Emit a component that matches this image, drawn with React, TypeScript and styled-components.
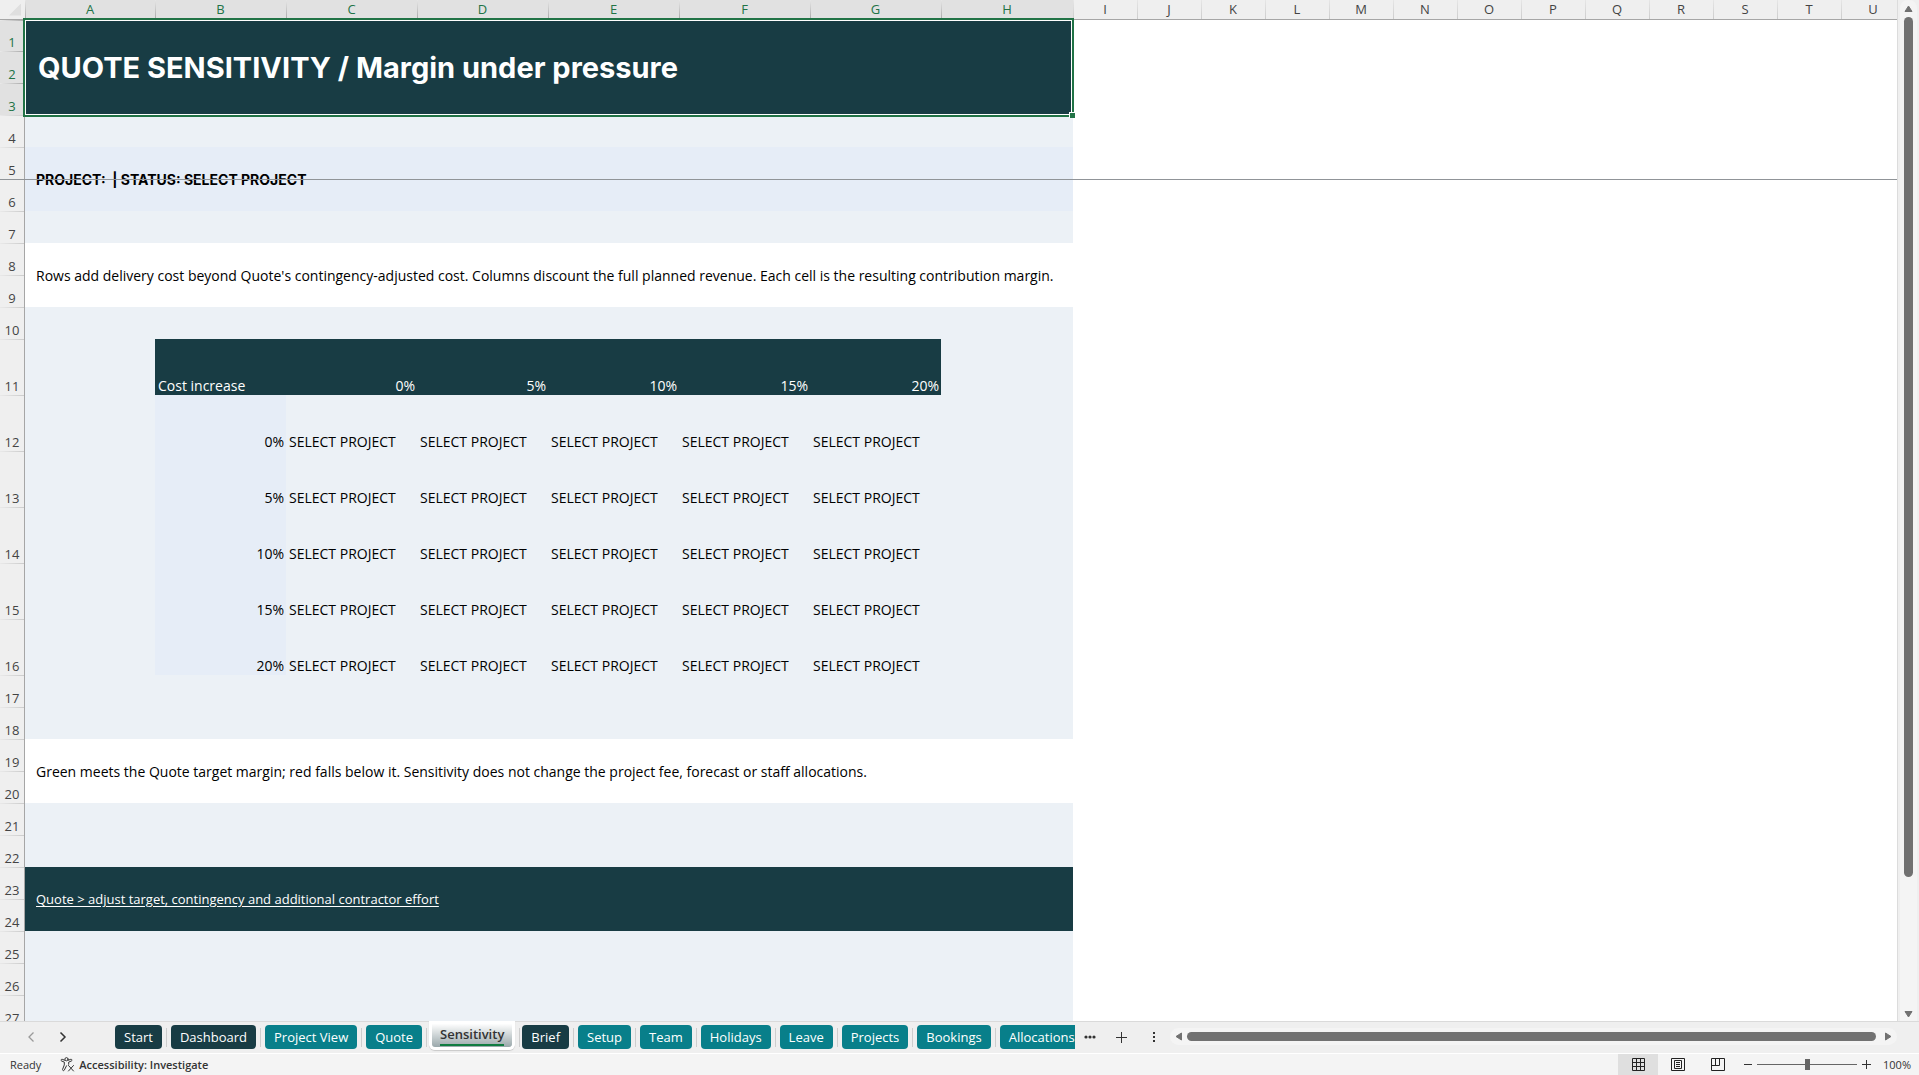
import React, { useState } from "react";
import styled, { createGlobalStyle, css } from "styled-components";

const color = {
  deep: "#183c44",
  teal: "#087f8a",
  sheet: "#ecf1f6",
  lavender: "#e6edf7",
  chrome: "#efefef",
  chromeSelected: "#e1e1e1",
  track: "#f4f4f4",
  thumb: "#717171",
  line: "#a6a6a6",
  green: "#217346",
  ink: "#444444",
};

const GlobalStyle = createGlobalStyle`
  *, *::before, *::after { box-sizing: border-box; }
  body {
    margin: 0;
    background: ${color.chrome};
    font-family: "Open Sans", "Noto Sans", sans-serif;
    color: #000;
  }
  button { font: inherit; color: inherit; border: 0; padding: 0; background: none; cursor: pointer; }
`;

const Window = styled.div`
  display: flex;
  flex-direction: column;
  height: 100vh;
  overflow: hidden;
`;

const Workspace = styled.main`
  display: flex;
  flex: 1;
  min-height: 0;
`;

const SheetPane = styled.div`
  position: relative;
  flex: 1;
  min-width: 0;
  overflow: hidden;
  background: #fff;
`;

const FreezeLine = styled.div`
  position: absolute;
  top: 179px;
  left: 0;
  right: 0;
  height: 1px;
  background: #909498;
`;

const Sheet = styled.table`
  table-layout: fixed;
  width: 100%;
  min-width: 1905px;
  border-collapse: separate;
  border-spacing: 0;
  font-size: 14px;
  line-height: 19px;

  th,
  td {
    padding: 0;
    font-weight: 400;
  }
`;

const Col = styled.col<{ $w: number }>`
  width: ${(p) => p.$w}px;
`;

const Corner = styled.th`
  height: 20px;
  background: ${color.chrome};
  border-bottom: 1px solid ${color.line};
`;

const SelectAll = styled.button`
  display: block;
  width: 12px;
  height: 12px;
  margin-left: 9px;
  background: #dfdfdf;
  clip-path: polygon(100% 0, 100% 100%, 0 100%);
`;

const selectedHead = css`
  background-color: ${color.chromeSelected};
  color: ${color.green};
`;

const ColumnHead = styled.th<{ $selected: boolean }>`
  height: 20px;
  font-size: 13px;
  line-height: 18px;
  text-align: center;
  vertical-align: top;
  color: ${color.ink};
  background: ${color.chrome} linear-gradient(#e6e6e6, ${(p) => (p.$selected ? "#a9a9a9" : "#cccccc")}) left / 1px 100% no-repeat;
  border-bottom: 1px solid ${color.line};
  ${(p) => p.$selected && selectedHead}
`;

const RowHead = styled.th<{ $selected: boolean }>`
  font-size: 13px;
  line-height: 18px;
  text-align: center;
  vertical-align: bottom;
  color: ${color.ink};
  background: ${color.chrome} linear-gradient(90deg, #e9e9e9, ${(p) => (p.$selected ? "#a9a9a9" : "#cccccc")}) top / 100% 1px no-repeat;
  border-right: 1px solid ${color.line};
  ${(p) => p.$selected && selectedHead}
`;

const Row = styled.tr<{ $h: number }>`
  height: ${(p) => p.$h}px;
`;

const Blank = styled.td`
  background: #fff;
`;

const Shade = styled.td`
  background: ${color.sheet};
`;

const TitleCell = styled.td`
  position: relative;
  background: ${color.deep};
`;

const Title = styled.h1`
  margin: 0;
  padding-left: 13px;
  font-family: Inter, "Liberation Sans", sans-serif;
  font-size: 29px;
  font-weight: 700;
  line-height: 40px;
  color: #fff;
`;

const Selection = styled.div`
  position: absolute;
  inset: -2px -1px -2px -2px;
  border: 2px solid ${color.green};
  box-shadow: inset 0 0 0 1px #fff;
  pointer-events: none;

  &::after {
    content: "";
    position: absolute;
    right: -3px;
    bottom: -3px;
    width: 6px;
    height: 6px;
    background: ${color.green};
    border-left: 1px solid #fff;
    border-top: 1px solid #fff;
  }
`;

const Band = styled.td<{ $tone: "lavender" | "white" | "deep" }>`
  background: ${(p) => (p.$tone === "lavender" ? color.lavender : p.$tone === "deep" ? color.deep : "#fff")};
`;

const Note = styled.p`
  margin: 0;
  padding-left: 11px;
`;

const Status = styled(Note)`
  font-family: Inter, "Liberation Sans", sans-serif;
  font-weight: 700;
  white-space: pre;
`;

const SheetLink = styled.a`
  margin-left: 11px;
  font-size: 13px;
  color: #fff;
  text-decoration: underline;
  text-underline-offset: 2px;
`;

const Cell = styled.td<{ $kind: "head" | "rate" | "value"; $right?: boolean }>`
  && {
    padding: 0 2px 0 3px;
  }
  vertical-align: bottom;
  white-space: nowrap;
  text-align: ${(p) => (p.$right ? "right" : "left")};
  color: ${(p) => (p.$kind === "head" ? "#fff" : "#000")};
  background: ${(p) => ({ head: color.deep, rate: color.lavender, value: color.sheet })[p.$kind]};
`;

const VerticalRail = styled.div`
  display: flex;
  flex: none;
  width: 22px;
  padding: 0 2px;
  border-left: 1px solid #dcdcdc;
`;

const VerticalTrack = styled.div`
  display: flex;
  flex-direction: column;
  align-items: center;
  flex: 1;
  padding: 5px 0 3px;
  background: ${color.track};
  border-radius: 8px 8px 0 0;
`;

const ArrowButton = styled.button`
  display: flex;
  flex: none;

  svg {
    display: block;
    fill: ${color.thumb};
  }
`;

const VerticalRun = styled.div`
  flex: 1;
  width: 9px;
  margin: 5px 0;
`;

const VerticalThumb = styled.div`
  height: 87%;
  border-radius: 5px;
  background: ${color.thumb};
`;

const TabBar = styled.nav`
  display: flex;
  flex: none;
  height: 32px;
  background: ${color.chrome};
  box-shadow: inset 0 1px #dadada;
`;

const TabArrows = styled.div`
  display: flex;
  flex: none;
  width: 115px;
  padding-left: 15px;
`;

const BarButton = styled.button<{ $w?: number; $dim?: boolean }>`
  display: flex;
  align-items: center;
  justify-content: center;
  flex: none;
  width: ${(p) => p.$w ?? 32}px;
  height: 32px;
  color: ${(p) => (p.$dim ? "#9a9a9a" : "#333")};
`;

const TabList = styled.div`
  display: flex;
  flex: 0 1 50%;
  min-width: 0;
  overflow: hidden;
`;

const TabSlot = styled.div<{ $active: boolean }>`
  display: flex;
  flex: none;
  align-items: center;

  &:not(:last-child)::after {
    content: "";
    width: 1px;
    height: 19px;
    margin: 0 4px;
    background: #cdcdcd;
  }

  ${(p) => p.$active && css`margin: 0 -2px 0 -2px;`}
`;

const Tab = styled.button<{ $dark: boolean }>`
  height: 24px;
  padding: 0 9px;
  border-radius: 4px;
  font-size: 13px;
  line-height: 24px;
  color: #fff;
  background: ${(p) => (p.$dark ? color.deep : color.teal)};
`;

const ActiveTab = styled.button`
  align-self: flex-start;
  height: 29px;
  padding: 0 8px 3px;
  border: 3px solid #fff;
  border-top: 0;
  border-radius: 0 0 6px 6px;
  background: linear-gradient(#fff 10%, #9aa8ab);
  box-shadow: 0 1px 1px #c8c8c8;
  font-size: 13px;
  font-weight: 600;
  line-height: 20px;
  color: #333;

  span {
    display: block;
    margin-top: 3px;
    border-bottom: 2px solid #107c41;
  }
`;

const HorizontalTrack = styled.div`
  display: flex;
  align-items: center;
  flex: 1;
  height: 17px;
  margin: 7px 22px 0 0;
  padding: 0 5px;
  gap: 5px;
  border-radius: 9px;
  background: ${color.track};
`;

const HorizontalThumb = styled.div`
  flex: 1;
  height: 9px;
  margin-right: 4px;
  border-radius: 5px;
  background: ${color.thumb};
`;

const StatusBar = styled.footer`
  display: flex;
  align-items: center;
  flex: none;
  height: 22px;
  padding: 0 8px 0 10px;
  border-top: 1px solid #fff;
  background: ${color.track};
  font-size: 11px;
  line-height: 16px;
  color: #333;
`;

const Accessibility = styled.button`
  display: flex;
  align-items: center;
  gap: 4px;
  margin-left: 19px;
  font-weight: 600;
`;

const Views = styled.div`
  display: flex;
  margin-left: auto;
`;

const ViewButton = styled.button<{ $on?: boolean }>`
  display: flex;
  align-items: center;
  justify-content: center;
  width: 40px;
  height: 21px;
  background: ${(p) => (p.$on ? "#dfdfdf" : "transparent")};
`;

const Zoom = styled.div`
  display: flex;
  align-items: center;
  gap: 5px;
  margin: 0 12px 0 6px;
`;

const ZoomButton = styled.button`
  display: flex;
  align-items: center;
  height: 16px;
`;

const ZoomRange = styled.input`
  appearance: none;
  width: 100px;
  height: 12px;
  margin: 0;
  background: linear-gradient(#666, #666) center / 100% 1px no-repeat;

  &::-webkit-slider-thumb {
    appearance: none;
    width: 5px;
    height: 11px;
    background: #666;
  }
`;

const leftColumns = ["A", "B", "C", "D", "E", "F", "G", "H"];
const rightColumns = ["I", "J", "K", "L", "M", "N", "O", "P", "Q", "R", "S", "T", "U"];
const columnWidths = [130, 131, 131, 131, 131, 131, 131, 132];
const rates = ["0%", "5%", "10%", "15%", "20%"];

const tabs = [
  { name: "Start", dark: true },
  { name: "Dashboard", dark: true },
  { name: "Project View", dark: false },
  { name: "Quote", dark: false },
  { name: "Sensitivity", dark: false },
  { name: "Brief", dark: true },
  { name: "Setup", dark: false },
  { name: "Team", dark: false },
  { name: "Holidays", dark: false },
  { name: "Leave", dark: false },
  { name: "Projects", dark: false },
  { name: "Bookings", dark: false },
  { name: "Allocations", dark: false },
];

function rowHeight(n: number) {
  if (n === 1) return 31;
  return n >= 11 && n <= 16 ? 56 : 32;
}

function rowCells(n: number) {
  switch (n) {
    case 1:
      return (
        <TitleCell colSpan={8} rowSpan={3}>
          <Title>QUOTE SENSITIVITY / Margin under pressure</Title>
          <Selection />
        </TitleCell>
      );
    case 5:
      return (
        <Band $tone="lavender" colSpan={8} rowSpan={2}>
          <Status>{"PROJECT:  | STATUS: SELECT PROJECT"}</Status>
        </Band>
      );
    case 8:
      return (
        <Band $tone="white" colSpan={8} rowSpan={2}>
          <Note>
            Rows add delivery cost beyond Quote's contingency-adjusted cost. Columns discount the full planned revenue.
            Each cell is the resulting contribution margin.
          </Note>
        </Band>
      );
    case 19:
      return (
        <Band $tone="white" colSpan={8} rowSpan={2}>
          <Note>
            Green meets the Quote target margin; red falls below it. Sensitivity does not change the project fee,
            forecast or staff allocations.
          </Note>
        </Band>
      );
    case 23:
      return (
        <Band $tone="deep" colSpan={8} rowSpan={2}>
          <SheetLink href="#quote">Quote &gt; adjust target, contingency and additional contractor effort</SheetLink>
        </Band>
      );
    case 2:
    case 3:
    case 6:
    case 9:
    case 20:
    case 24:
      return null;
    case 11:
      return (
        <>
          <Shade />
          <Cell $kind="head">Cost increase</Cell>
          {rates.map((r) => (
            <Cell key={r} $kind="head" $right>
              {r}
            </Cell>
          ))}
          <Shade />
        </>
      );
    case 12:
    case 13:
    case 14:
    case 15:
    case 16:
      return (
        <>
          <Shade />
          <Cell $kind="rate" $right>
            {rates[n - 12]}
          </Cell>
          {rates.map((r) => (
            <Cell key={r} $kind="value">
              SELECT PROJECT
            </Cell>
          ))}
          <Shade />
        </>
      );
    default:
      return <Shade colSpan={8} />;
  }
}

function Grid() {
  return (
    <Sheet>
      <colgroup>
        <Col $w={25} />
        {columnWidths.map((w, i) => (
          <Col key={i} $w={w} />
        ))}
        {rightColumns.slice(0, -1).map((c) => (
          <Col key={c} $w={64} />
        ))}
        <col />
      </colgroup>
      <thead>
        <tr>
          <Corner>
            <SelectAll aria-label="Select all" />
          </Corner>
          {leftColumns.map((c) => (
            <ColumnHead key={c} scope="col" $selected>
              {c}
            </ColumnHead>
          ))}
          {rightColumns.map((c) => (
            <ColumnHead key={c} scope="col" $selected={false}>
              {c}
            </ColumnHead>
          ))}
        </tr>
      </thead>
      <tbody>
        {Array.from({ length: 27 }, (_, i) => i + 1).map((n) => (
          <Row key={n} $h={rowHeight(n)}>
            <RowHead scope="row" $selected={n <= 3}>
              {n}
            </RowHead>
            {rowCells(n)}
            <Blank colSpan={rightColumns.length} />
          </Row>
        ))}
      </tbody>
    </Sheet>
  );
}

function Arrow({ label, w, h, points }: { label: string; w: number; h: number; points: string }) {
  return (
    <ArrowButton aria-label={label}>
      <svg width={w} height={h} viewBox={`0 0 ${w} ${h}`}>
        <polygon points={points} stroke={color.thumb} strokeLinejoin="round" />
      </svg>
    </ArrowButton>
  );
}

export default function App() {
  const [zoom, setZoom] = useState(100);
  return (
    <Window>
      <GlobalStyle />
      <Workspace>
        <SheetPane>
          <Grid />
          <FreezeLine />
        </SheetPane>
        <VerticalRail>
          <VerticalTrack>
            <Arrow label="Scroll up" w={9} h={7} points="4.5,1 8,6.5 1,6.5" />
            <VerticalRun>
              <VerticalThumb />
            </VerticalRun>
            <Arrow label="Scroll down" w={9} h={7} points="1,0.5 8,0.5 4.5,6" />
          </VerticalTrack>
        </VerticalRail>
      </Workspace>

      <TabBar aria-label="Sheets">
        <TabArrows>
          <BarButton aria-label="Previous sheet" $dim>
            <svg width="8" height="12" viewBox="0 0 8 12" fill="none" stroke="currentColor" strokeWidth="1.3">
              <path d="M6.5 1.5 2 6l4.5 4.5" />
            </svg>
          </BarButton>
          <BarButton aria-label="Next sheet">
            <svg width="8" height="12" viewBox="0 0 8 12" fill="none" stroke="currentColor" strokeWidth="1.5">
              <path d="M1.5 1.5 6 6l-4.5 4.5" />
            </svg>
          </BarButton>
        </TabArrows>
        <TabList>
          {tabs.map((t) => (
            <TabSlot key={t.name} $active={t.name === "Sensitivity"}>
              {t.name === "Sensitivity" ? (
                <ActiveTab aria-current="page">
                  <span>{t.name}</span>
                </ActiveTab>
              ) : (
                <Tab $dark={t.dark}>{t.name}</Tab>
              )}
            </TabSlot>
          ))}
        </TabList>
        <BarButton aria-label="More sheets" $w={31}>
          <svg width="12" height="4" viewBox="0 0 12 4" fill="currentColor">
            <circle cx="2" cy="2" r="1.6" />
            <circle cx="6" cy="2" r="1.6" />
            <circle cx="10" cy="2" r="1.6" />
          </svg>
        </BarButton>
        <BarButton aria-label="New sheet">
          <svg width="11" height="11" viewBox="0 0 11 11" stroke="currentColor">
            <path d="M5.5 0v11M0 5.5h11" />
          </svg>
        </BarButton>
        <BarButton aria-label="Resize tab area">
          <svg width="2" height="10" viewBox="0 0 2 10" fill="currentColor">
            <path d="M0 0h2v2H0zM0 4h2v2H0zM0 8h2v2H0z" />
          </svg>
        </BarButton>
        <HorizontalTrack>
          <Arrow label="Scroll left" w={7} h={9} points="6.5,1 6.5,8 1,4.5" />
          <HorizontalThumb />
          <Arrow label="Scroll right" w={7} h={9} points="0.5,1 0.5,8 6,4.5" />
        </HorizontalTrack>
      </TabBar>

      <StatusBar>
        <span>Ready</span>
        <Accessibility>
          <svg width="15" height="15" viewBox="0 0 15 15" fill="none" stroke="#333" strokeLinecap="round" strokeLinejoin="round">
            <circle cx="6.5" cy="2.2" r="1.6" />
            <path d="M4.9 3.3 2.2 2.3C1 2 .6 3.6 1.6 4l2.7 1.1v2.8L2.6 12.3c-.4 1.2 1.2 1.9 1.7.8l2.2-4.3" />
            <path d="M8.1 3.3l2.7-1c1.2-.3 1.6 1.3.6 1.7L8.7 5.1v2.2" />
            <path d="M8.5 8.5l5 5.5M13.5 8.5l-5 5.5" />
          </svg>
          Accessibility: Investigate
        </Accessibility>
        <Views>
          <ViewButton $on aria-label="Normal view">
            <svg width="13" height="13" viewBox="0 0 13 13" fill="none" stroke="#222">
              <path d="M.5.5h12v12H.5zM4.5.5v12M8.5.5v12M.5 4.5h12M.5 8.5h12" />
            </svg>
          </ViewButton>
          <ViewButton aria-label="Page layout view">
            <svg width="14" height="13" viewBox="0 0 14 13" fill="none" stroke="#222">
              <path d="M.5.5h13v12H.5zM3.5 2.5h7v8h-7zM5 4.5h4M5 6.5h4M5 8.5h4" />
            </svg>
          </ViewButton>
          <ViewButton aria-label="Page break preview">
            <svg width="14" height="13" viewBox="0 0 14 13" fill="none" stroke="#222">
              <path d="M.5.5h13v12H.5zM.5 7.5h8v-7M4.5.5v7" />
            </svg>
          </ViewButton>
        </Views>
        <Zoom>
          <ZoomButton aria-label="Zoom out" onClick={() => setZoom(zoom - 10)}>
            <svg width="8" height="9" viewBox="0 0 8 9" stroke="#333">
              <path d="M0 4.5h8" />
            </svg>
          </ZoomButton>
          <ZoomRange
            type="range"
            aria-label="Zoom"
            min={0}
            max={200}
            value={zoom}
            onChange={(e) => setZoom(Number(e.target.value))}
          />
          <ZoomButton aria-label="Zoom in" onClick={() => setZoom(zoom + 10)}>
            <svg width="9" height="9" viewBox="0 0 9 9" stroke="#333">
              <path d="M0 4.5h9M4.5 0v9" />
            </svg>
          </ZoomButton>
        </Zoom>
        <span>{zoom}%</span>
      </StatusBar>
    </Window>
  );
}
